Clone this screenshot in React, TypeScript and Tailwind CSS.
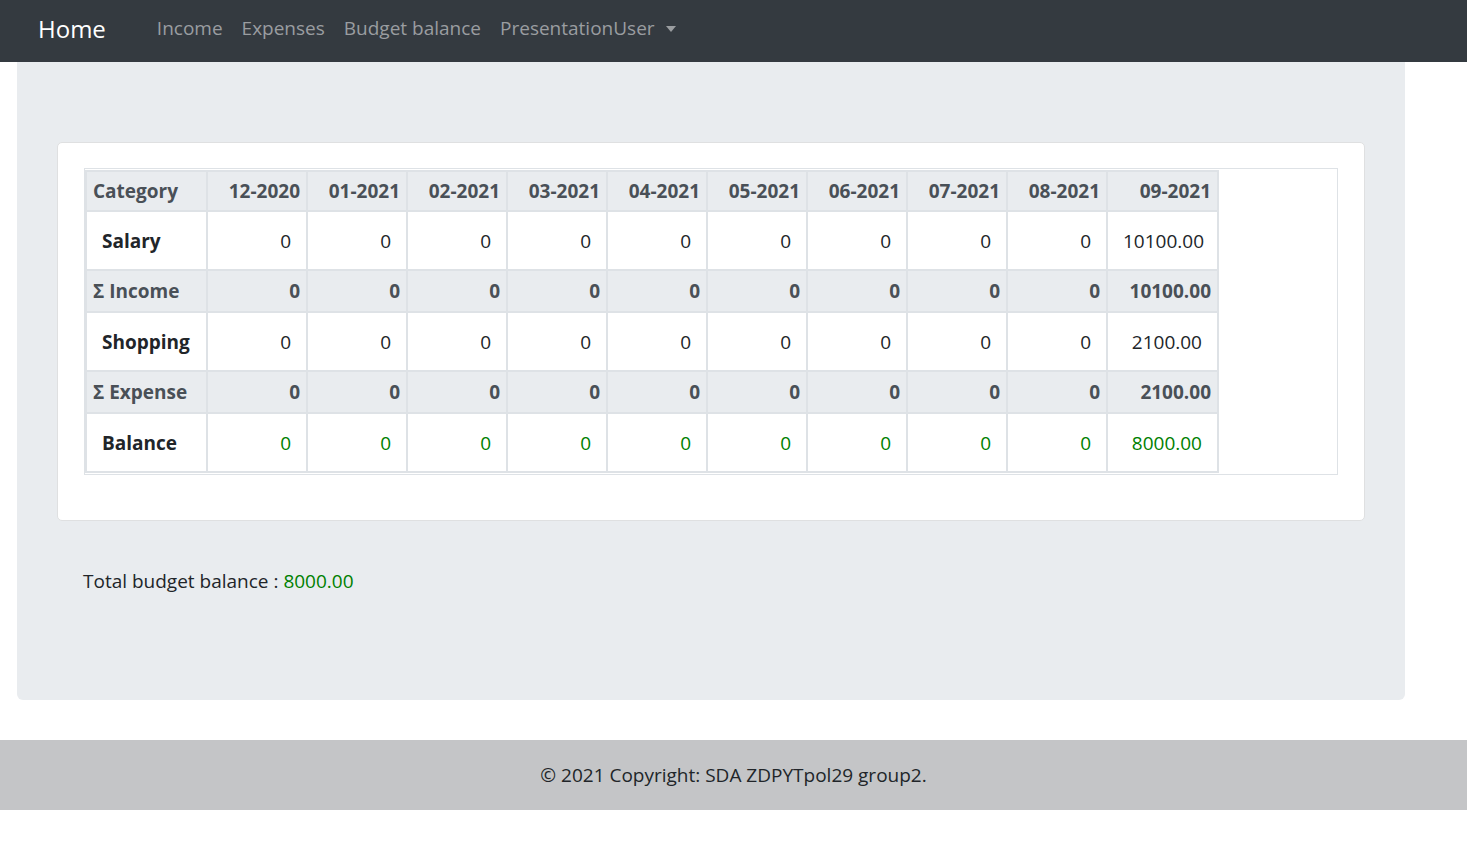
import React from 'react';

const months = ['12-2020', '01-2021', '02-2021', '03-2021', '04-2021', '05-2021', '06-2021', '07-2021', '08-2021', '09-2021'];

type Row = { kind: 'data' | 'sum'; label: string; values: string[]; green?: boolean };

const zeros = (last: string) => [...Array(9).fill('0'), last];

const rows: Row[] = [
  { kind: 'data', label: 'Salary', values: zeros('10100.00') },
  { kind: 'sum', label: 'Σ Income', values: zeros('10100.00') },
  { kind: 'data', label: 'Shopping', values: zeros('2100.00') },
  { kind: 'sum', label: 'Σ Expense', values: zeros('2100.00') },
  { kind: 'data', label: 'Balance', values: zeros('8000.00'), green: true },
];

function NavBar() {
  return (
    <nav className="h-[62px] bg-[#343a40] flex items-center pl-[38px] pb-[5px]">
      <span className="text-[24px] text-white leading-none mr-[51px]">Home</span>
      <div className="flex items-center gap-[19px] text-[19px] text-[#9a9da0]">
        <span>Income</span>
        <span>Expenses</span>
        <span>Budget balance</span>
        <span className="flex items-center">
          PresentationUser
          <span className="ml-[11px] w-0 h-0 border-l-[5px] border-r-[5px] border-t-[6px] border-l-transparent border-r-transparent border-t-[#9a9da0]" />
        </span>
      </div>
    </nav>
  );
}

function BudgetTable() {
  return (
    <div className="border border-[#dee2e6] pt-px pb-px">
      <table className="border-collapse table-fixed w-[1132px] text-[19px] leading-[30px]">
        <thead>
          <tr className="bg-[#e9ecef] text-[#495057] font-bold">
            <th className="border-2 border-[#dee2e6] text-left px-[6px] py-[4px] w-[121px]">Category</th>
            {months.map((m, i) => (
              <th key={m} className={`border-2 border-[#dee2e6] text-right px-[6px] py-[4px] ${i === 9 ? 'w-[111px]' : 'w-[100px]'}`}>
                {m}
              </th>
            ))}
          </tr>
        </thead>
        <tbody>
          {rows.map((r) =>
            r.kind === 'sum' ? (
              <tr key={r.label} className="bg-[#e9ecef] text-[#495057] font-bold">
                <td className="border-2 border-[#dee2e6] text-left px-[6px] py-[5px]">{r.label}</td>
                {r.values.map((v, i) => (
                  <td key={i} className="border-2 border-[#dee2e6] text-right px-[6px] py-[5px]">{v}</td>
                ))}
              </tr>
            ) : (
              <tr key={r.label} className="bg-white">
                <td className="border-2 border-[#dee2e6] text-left px-[15px] pt-[14px] pb-[13px] font-bold text-[#212529]">{r.label}</td>
                {r.values.map((v, i) => (
                  <td
                    key={i}
                    className={`border-2 border-[#dee2e6] text-right px-[15px] pt-[14px] pb-[13px] ${r.green ? 'text-[#008000]' : 'text-[#212529]'}`}
                  >
                    {v}
                  </td>
                ))}
              </tr>
            )
          )}
        </tbody>
      </table>
    </div>
  );
}

export default function App() {
  return (
    <div className="min-h-[865px] bg-white" style={{ fontFamily: '"Open Sans", "Noto Sans", sans-serif' }}>
      <NavBar />
      <main className="ml-[17px] w-[1388px] bg-[#e9ecef] rounded-b-[6px] px-[40px] pt-[80px] pb-[80px]">
        <div className="bg-white border border-[#dfe0e1] rounded-[5px] px-[26px] pt-[25px] pb-[45px]">
          <BudgetTable />
        </div>
        <p className="px-[26px] pt-[45px] pb-[24px] text-[19px] leading-[30px] text-[#212529]">
          Total budget balance : <span className="text-[#008000]">8000.00</span>
        </p>
      </main>
      <footer className="mt-[40px] h-[70px] bg-[#c4c5c7] flex items-center justify-center text-[19px] text-[#212529]">
        © 2021 Copyright: SDA ZDPYTpol29 group2.
      </footer>
    </div>
  );
}
